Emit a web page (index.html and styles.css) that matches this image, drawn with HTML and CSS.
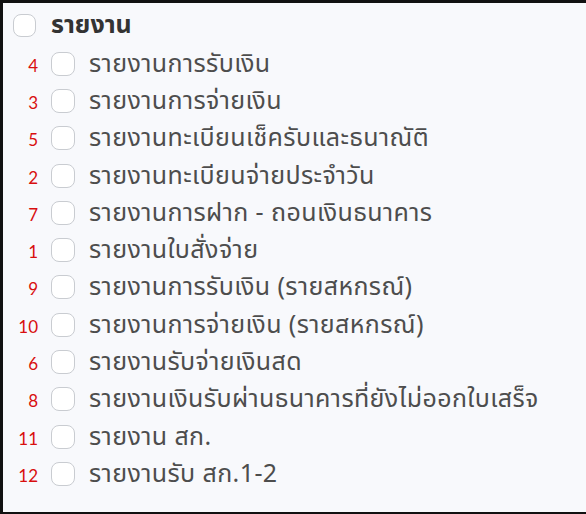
FILE: index.html
```html
<!DOCTYPE html>
<html lang="th">
<head>
<meta charset="utf-8">
<link rel="stylesheet" href="styles.css">
</head>
<body>
<div class="frame">
  <div class="tree">
    <div class="head">
      <span class="box"></span>
      <span class="head-label">รายงาน</span>
    </div>
    <ul class="list">
      <li class="item"><span class="num">4</span><span class="box"></span><span class="label">รายงานการรับเงิน</span></li>
      <li class="item"><span class="num">3</span><span class="box"></span><span class="label">รายงานการจ่ายเงิน</span></li>
      <li class="item"><span class="num">5</span><span class="box"></span><span class="label">รายงานทะเบียนเช็ครับและธนาณัติ</span></li>
      <li class="item"><span class="num">2</span><span class="box"></span><span class="label">รายงานทะเบียนจ่ายประจำวัน</span></li>
      <li class="item"><span class="num">7</span><span class="box"></span><span class="label">รายงานการฝาก - ถอนเงินธนาคาร</span></li>
      <li class="item"><span class="num">1</span><span class="box"></span><span class="label">รายงานใบสั่งจ่าย</span></li>
      <li class="item"><span class="num">9</span><span class="box"></span><span class="label">รายงานการรับเงิน (รายสหกรณ์)</span></li>
      <li class="item"><span class="num">10</span><span class="box"></span><span class="label">รายงานการจ่ายเงิน (รายสหกรณ์)</span></li>
      <li class="item"><span class="num">6</span><span class="box"></span><span class="label">รายงานรับจ่ายเงินสด</span></li>
      <li class="item"><span class="num">8</span><span class="box"></span><span class="label">รายงานเงินรับผ่านธนาคารที่ยังไม่ออกใบเสร็จ</span></li>
      <li class="item"><span class="num">11</span><span class="box"></span><span class="label">รายงาน สก.</span></li>
      <li class="item"><span class="num">12</span><span class="box"></span><span class="label">รายงานรับ สก.1-2</span></li>
    </ul>
  </div>
</div>
</body>
</html>
```
FILE: styles.css
```css
html, body {
  margin: 0;
  padding: 0;
}
body {
  width: 586px;
  height: 514px;
  overflow: hidden;
  background: #111;
}
.frame {
  box-sizing: border-box;
  width: 586px;
  height: 514px;
  border-top: 3px solid #111;
  border-left: 3px solid #111;
  border-bottom: 2px solid #111;
  background: #f8f9fc;
  font-family: "Noto Sans Thai", "Leelawadee UI", Tahoma, "Noto Sans", sans-serif;
  color: #4d4d4d;
}
.tree {
  padding: 10px 0 0 10px;
}
.head {
  display: flex;
  align-items: center;
  height: 24px;
}
.head .box {
  width: 23px;
  height: 23px;
}
.head-label {
  margin-left: 15px;
  font-size: 25px;
  line-height: 24px;
  font-weight: bold;
  color: #333;
}
.box {
  box-sizing: border-box;
  width: 24px;
  height: 24px;
  border: 1px solid #c9ccd1;
  border-radius: 8px;
  background: #fff;
  flex: none;
}
.list {
  list-style: none;
  margin: 8px 0 0 0;
  padding: 0;
}
.item {
  display: flex;
  align-items: center;
  height: 37.3px;
}
.num {
  width: 25px;
  padding-top: 4px;
  text-align: right;
  margin-right: 13px;
  color: #d80f0f;
  font-family: Lato, "Liberation Sans", sans-serif;
  font-size: 17px;
  line-height: 20px;
}
.label {
  margin-left: 14px;
  font-size: 25px;
  line-height: 30px;
  letter-spacing: 0.4px;
  white-space: nowrap;
}
```
